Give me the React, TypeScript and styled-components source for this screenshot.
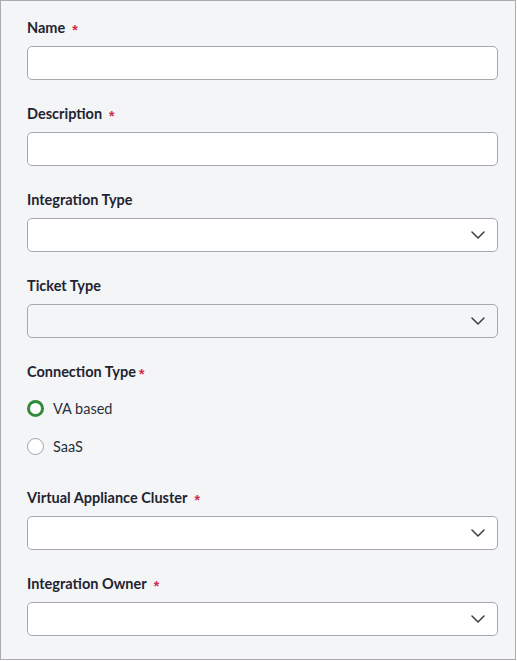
import React from 'react'
import styled, { createGlobalStyle } from 'styled-components'

const GlobalStyle = createGlobalStyle`
  html, body {
    margin: 0;
    padding: 0;
    background: #ffffff;
  }
  body {
    font-family: Lato, 'Liberation Sans', sans-serif;
  }
`

const Panel = styled.div`
  box-sizing: border-box;
  width: 516px;
  height: 660px;
  border: 1px solid #a9adb2;
  background: #f4f5f7;
  padding: 18px 18px 0 26px;
  display: flex;
  flex-direction: column;
`

const Field = styled.div<{ $gap?: number }>`
  display: flex;
  flex-direction: column;
  margin-bottom: ${p => p.$gap ?? 25}px;
`

const Label = styled.label`
  display: flex;
  align-items: flex-start;
  height: 20px;
  line-height: 18px;
  margin-bottom: 7px;
  font-size: 14.5px;
  font-weight: 700;
  color: #1f2430;
`

const Required = styled.span<{ $tight?: boolean }>`
  color: #d42a4e;
  font-family: 'Liberation Sans', sans-serif;
  font-size: 14px;
  font-weight: 700;
  margin-left: ${p => (p.$tight ? 3 : 7)}px;
  line-height: 18px;
  position: relative;
  top: 2px;
`

const TextInput = styled.input`
  box-sizing: border-box;
  width: 471px;
  height: 34px;
  border: 1px solid #a4a9b0;
  border-radius: 5px;
  background: #ffffff;
  padding: 0 12px;
  font: inherit;
  outline: none;
`

const SelectBox = styled.div<{ $disabled?: boolean }>`
  box-sizing: border-box;
  width: 471px;
  height: 34px;
  border: 1px solid #a4a9b0;
  border-radius: 5px;
  background: ${p => (p.$disabled ? '#f4f5f7' : '#ffffff')};
  display: flex;
  align-items: center;
  justify-content: flex-end;
  padding-right: 12px;
`

const Chevron = styled.svg`
  width: 14px;
  height: 8px;
  display: block;
`

const RadioGroup = styled.div`
  display: flex;
  flex-direction: column;
  gap: 20px;
  padding-top: 9px;
`

const RadioRow = styled.div`
  display: flex;
  align-items: center;
  height: 18px;
  gap: 9px;
  font-size: 14.5px;
  color: #2a2f3a;
`

const RadioDot = styled.span<{ $checked?: boolean }>`
  box-sizing: border-box;
  width: 17px;
  height: 17px;
  border-radius: 50%;
  background: #ffffff;
  border: ${p => (p.$checked ? '3.5px solid #2f8a3c' : '1px solid #9ea3aa')};
`

const Select: React.FC<{ disabled?: boolean }> = ({ disabled }) => (
  <SelectBox $disabled={disabled}>
    <Chevron viewBox="0 0 14 8" fill="none">
      <path d="M1 1l6 6 6-6" stroke="#3a3f48" strokeWidth="1.5" strokeLinecap="round" strokeLinejoin="round" />
    </Chevron>
  </SelectBox>
)

export default function App() {
  return (
    <>
      <GlobalStyle />
      <Panel>
        <Field>
          <Label>
            Name<Required>*</Required>
          </Label>
          <TextInput />
        </Field>
        <Field>
          <Label>
            Description<Required>*</Required>
          </Label>
          <TextInput />
        </Field>
        <Field>
          <Label>Integration Type</Label>
          <Select />
        </Field>
        <Field>
          <Label>Ticket Type</Label>
          <Select disabled />
        </Field>
        <Field $gap={34}>
          <Label>
            Connection Type<Required $tight>*</Required>
          </Label>
          <RadioGroup>
            <RadioRow>
              <RadioDot $checked />
              VA based
            </RadioRow>
            <RadioRow>
              <RadioDot />
              SaaS
            </RadioRow>
          </RadioGroup>
        </Field>
        <Field>
          <Label>
            Virtual Appliance Cluster<Required>*</Required>
          </Label>
          <Select />
        </Field>
        <Field>
          <Label>
            Integration Owner<Required>*</Required>
          </Label>
          <Select />
        </Field>
      </Panel>
    </>
  )
}
